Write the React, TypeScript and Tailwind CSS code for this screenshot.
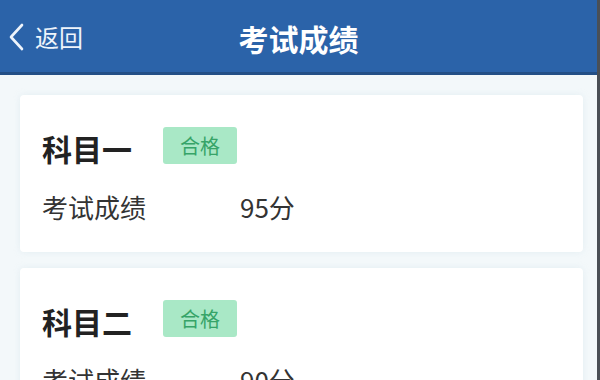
import React from "react";

const font = { fontFamily: '"Noto Sans CJK SC", "Noto Sans", sans-serif' };

function Card({ title, score }: { title: string; score: string }) {
  return (
    <div className="bg-white rounded-[4px] pl-[22px] pt-[35px] pb-[30px] shadow-[0_0_6px_rgba(200,220,230,0.35)]">
      <div className="flex items-center h-[37px]">
        <span className="text-[30px] leading-[37px] font-bold text-[#222]">{title}</span>
        <span className="ml-[31px] bg-[#a9e8c6] text-[#36a468] text-[20px] leading-[37px] px-[17px] rounded-[3px] -translate-y-[3px]">合格</span>
      </div>
      <div className="flex items-center mt-[25px] text-[26px] leading-[30px] text-[#333]">
        <span className="w-[198px]">考试成绩</span>
        <span>{score}</span>
      </div>
    </div>
  );
}

export default function App() {
  return (
    <div style={font} className="w-[600px] h-[380px] overflow-hidden bg-[#f3f8fa] flex">
      <div className="flex-1 flex flex-col">
        <div className="h-[75px] pt-[4px] bg-[#2b63a9] border-b-[3px] border-[#234f86] relative flex items-center justify-center shrink-0">
          <div className="absolute left-[8px] top-[2px] bottom-0 flex items-center text-[#eef4fb]">
            <svg width="16" height="28" viewBox="0 0 16 28" fill="none">
              <path d="M14 2 L3 14 L14 26" stroke="#eef4fb" strokeWidth="2.6" strokeLinecap="round" strokeLinejoin="round" />
            </svg>
            <span className="ml-[11px] text-[24px] leading-none">返回</span>
          </div>
          <span className="text-white text-[30px] font-bold leading-none">考试成绩</span>
        </div>
        <div className="pl-[20px] pr-[14px] pt-[20px] flex flex-col gap-[16px]">
          <Card title="科目一" score="95分" />
          <Card title="科目二" score="90分" />
        </div>
      </div>
      <div className="w-[3px] bg-[#4a4f55] shrink-0" />
    </div>
  );
}
